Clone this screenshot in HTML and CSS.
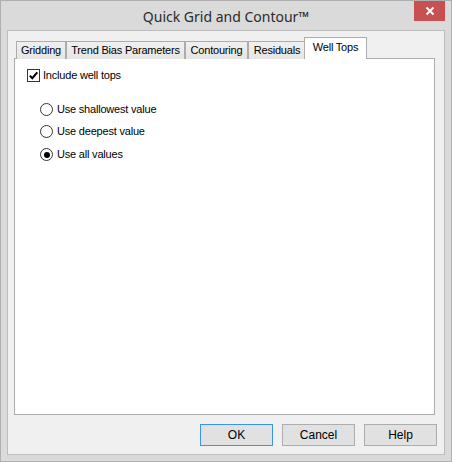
FILE: index.html
```html
<!DOCTYPE html>
<html>
<head>
<meta charset="utf-8">
<link rel="stylesheet" href="styles.css">
</head>
<body>
<div class="window">
  <div class="titlebar">
    <div class="title">Quick Grid and Contour™</div>
    <div class="close">
      <svg width="10" height="10" viewBox="0 0 10 10"><path d="M1.5 1.5 L8.5 8.5 M8.5 1.5 L1.5 8.5" stroke="#fff" stroke-width="2" fill="none"/></svg>
    </div>
  </div>
  <div class="client">
    <div class="tabs">
      <div class="tab t1">Gridding</div>
      <div class="tab t2">Trend Bias Parameters</div>
      <div class="tab t3">Contouring</div>
      <div class="tab t4">Residuals</div>
      <div class="tab active t5">Well Tops</div>
    </div>
    <div class="panel">
      <label class="check">
        <span class="box"><svg width="11" height="11" viewBox="0 0 11 11"><path d="M1.8 5.6 L4.3 8.2 L9.3 2.4" stroke="#000" stroke-width="2" fill="none"/></svg></span>
        <span class="lbl">Include well tops</span>
      </label>
      <div class="radios">
        <label class="radio"><span class="circle"></span><span class="lbl">Use shallowest value</span></label>
        <label class="radio"><span class="circle"></span><span class="lbl">Use deepest value</span></label>
        <label class="radio"><span class="circle on"></span><span class="lbl">Use all values</span></label>
      </div>
    </div>
    <div class="buttons">
      <div class="btn default">OK</div>
      <div class="btn">Cancel</div>
      <div class="btn">Help</div>
    </div>
  </div>
</div>
</body>
</html>
```
FILE: styles.css
```css
* { box-sizing: border-box; }
html, body { margin: 0; padding: 0; }
body { width: 452px; height: 462px; overflow: hidden; background: #dadada; }
.window {
  width: 452px; height: 462px;
  border: 1px solid #b0b0b0;
  background: #dadada;
  display: flex; flex-direction: column;
  font-family: "Liberation Sans", Arial, sans-serif;
  font-size: 11px; letter-spacing: -0.2px; color: #000;
}
.titlebar {
  height: 29px; flex: none;
  display: grid; grid-template-columns: 1fr auto;
  align-items: start;
}
.title {
  grid-column: 1 / 3; grid-row: 1;
  text-align: center;
  font-family: "Noto Sans", "Open Sans", sans-serif;
  font-size: 14px; letter-spacing: 0;
  color: #2b2b2b;
  padding-top: 6px;
}
.close {
  grid-column: 2; grid-row: 1;
  width: 31px; height: 20px;
  margin-right: 6px;
  background: #c75050;
  display: flex; align-items: center; justify-content: center;
}
.client {
  flex: 1;
  margin: 0 6px 6px 6px;
  background: #f0f0f0;
  border: 1px solid #bdbdbd;
  padding: 7px 9px 0 6px;
  display: flex; flex-direction: column;
}
.tabs {
  display: flex; align-items: flex-end;
  height: 21px; padding-left: 2px;
  position: relative; z-index: 1;
}
.tab {
  height: 18px;
  border: 1px solid #acacac; border-bottom: none;
  background: linear-gradient(#f0f0f0, #e5e5e5);
  padding-top: 2px;
  text-align: center;
  color: #000;
  white-space: nowrap;
}
.t1 { width: 50px; }
.t2 { width: 119px; }
.t3 { width: 63px; }
.t4 { width: 58px; }
.tab.active {
  width: 63px; height: 22px;
  margin-left: -2px;
  background: #fff;
  padding-top: 3px;
  position: relative;
}
.panel {
  height: 357px; flex: none;
  margin-top: -1px;
  background: #fff;
  border: 1px solid #adadad;
  padding: 10px 0 0 12px;
}
.check, .radio { display: flex; align-items: center; }
.box {
  width: 13px; height: 13px;
  border: 1px solid #333;
  background: #fff;
  display: flex; align-items: center; justify-content: center;
  margin-right: 3px;
}
.radios {
  display: flex; flex-direction: column; gap: 9px;
  padding: 21px 0 0 13px;
}
.radio:last-child { margin-top: 1px; }
.circle {
  width: 13px; height: 13px; border-radius: 50%;
  border: 1px solid #333; background: #fff;
  margin-right: 4px;
  display: flex; align-items: center; justify-content: center;
}
.circle.on::after {
  content: ""; width: 6px; height: 6px; border-radius: 50%; background: #000;
}
.lbl { line-height: 13px; }
.buttons {
  display: flex; justify-content: flex-end; gap: 9px;
  padding-top: 9px; margin-right: -2px;
}
.btn {
  width: 73px; height: 22px;
  border: 1px solid #adadad;
  background: #e1e1e1;
  display: flex; align-items: center; justify-content: center;
  font-size: 12px; letter-spacing: 0;
}
.btn.default { border-color: #3c94e8; }
```
